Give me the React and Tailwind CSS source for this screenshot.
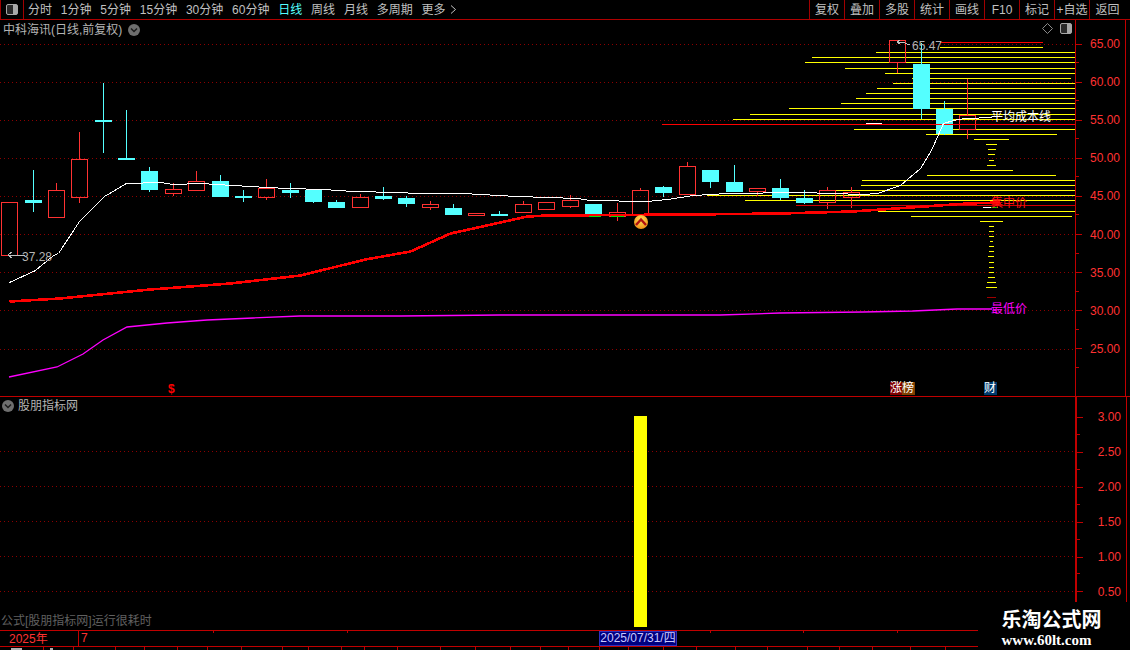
import React from 'react';

const tabs = [
  ['分时', 'text-[#c0c0c0]'], ['1分钟', 'text-[#c0c0c0]'], ['5分钟', 'text-[#c0c0c0]'], ['15分钟', 'text-[#c0c0c0]'],
  ['30分钟', 'text-[#c0c0c0]'], ['60分钟', 'text-[#c0c0c0]'], ['日线', 'text-[#54ffff]'], ['周线', 'text-[#c0c0c0]'],
  ['月线', 'text-[#c0c0c0]'], ['多周期', 'text-[#c0c0c0]'],
];
const tools = ['复权', '叠加', '多股', '统计', '画线', 'F10', '标记', '+自选', '返回'];
const upperAxis = ['65.00', '60.00', '55.00', '50.00', '45.00', '40.00', '35.00', '30.00', '25.00'];
const lowerAxis = ['3.00', '2.50', '2.00', '1.50', '1.00', '0.50'];
const upperGrid = [44, 82, 120, 158, 196, 234, 272, 310, 349];
const lowerGrid = [451, 486, 521, 556, 591];

// x, high, top, bottom, low, up(red)/down(cyan)
const candles = [
  [9, 202, 202, 255, 255, 1], [33, 170, 200, 202, 212, 0], [56, 183, 190, 217, 217, 1], [79, 132, 159, 197, 203, 1],
  [103, 83, 120, 121, 153, 0], [126, 110, 158, 159, 159, 0], [149, 167, 171, 189, 192, 0], [173, 183, 189, 193, 196, 1],
  [196, 171, 181, 190, 191, 1], [220, 175, 181, 196, 197, 0], [243, 190, 196, 197, 202, 0], [266, 179, 188, 197, 200, 1],
  [290, 183, 190, 192, 198, 0], [313, 190, 190, 201, 203, 0], [336, 200, 202, 207, 208, 0], [360, 194, 197, 207, 207, 1],
  [383, 187, 196, 198, 200, 0], [406, 196, 198, 203, 207, 0], [430, 201, 204, 207, 210, 1], [453, 204, 208, 214, 215, 0],
  [476, 213, 213, 215, 216, 1], [499, 211, 214, 215, 216, 0], [523, 201, 204, 212, 213, 1], [546, 202, 202, 209, 209, 1],
  [570, 195, 200, 206, 208, 1], [593, 204, 204, 214, 214, 0], [617, 203, 212, 216, 221, 1], [640, 188, 190, 214, 214, 1],
  [663, 186, 187, 192, 197, 0], [687, 162, 166, 194, 195, 1], [710, 170, 170, 181, 188, 0], [734, 165, 182, 191, 191, 0],
  [757, 188, 188, 191, 196, 1], [780, 179, 188, 197, 200, 0], [804, 190, 198, 202, 204, 0], [827, 187, 190, 202, 209, 1],
  [851, 187, 192, 197, 208, 1], [874, 123, 123, 124, 124, 2], [897, 40, 40, 62, 73, 1], [921, 43, 64, 108, 119, 0],
  [944, 101, 109, 133, 135, 0], [967, 79, 115, 129, 139, 1],
];

// x1, x2, y of the chip distribution bars
const chips = [
  [940, 1043, 47], [876, 1075, 52], [812, 1075, 57], [805, 1075, 62], [845, 1075, 68], [885, 1075, 73], [912, 1071, 78],
  [893, 1075, 83], [877, 1075, 88], [866, 1075, 93], [856, 1075, 98], [841, 1075, 103], [789, 1075, 108], [750, 1075, 114],
  [733, 1075, 119], [854, 1075, 129], [926, 1057, 134], [974, 1009, 139], [986, 997, 144], [988, 996, 149], [988, 995, 154],
  [989, 994, 160], [987, 996, 165], [970, 1013, 170], [927, 1056, 175], [862, 1075, 180], [861, 1075, 185], [833, 1075, 190],
  [707, 1075, 195], [745, 1075, 200], [878, 1075, 211], [911, 1072, 216], [980, 1003, 221], [989, 994, 226], [989, 994, 231],
  [989, 994, 236], [990, 993, 241], [989, 994, 246], [989, 994, 251], [988, 994, 256], [989, 994, 262], [989, 994, 267],
  [989, 994, 272], [988, 995, 277], [987, 996, 282], [986, 997, 287],
];

const whiteLine = '9,282 35,270 53,255 58,253 79,221 104,196 126,183 160,182 173,184 200,183 233,185 267,187 287,188 323,189 353,191 397,192 417,193 463,193 480,194 517,196 577,198 590,200 647,201 667,199 693,195 727,193 800,192 863,194 877,193 900,185 920,168 931,150 943,123 953,120 965,118 992,117';
const redLine = '9,301 60,298 150,289 230,283 300,275 365,259 410,251 450,233 500,222 527,216 547,215 688,214 780,213 852,211 910,207 967,203 1000,202';
const magentaLine = '9,377 57,367 83,354 103,340 127,327 167,323 207,320 253,318 300,316 400,316 500,315 720,315 780,313 863,312 913,311 957,309 992,309';

const ticks = [213, 347, 710, 803, 897];
const cells = [43, 73, 115, 144, 177, 207, 241, 282, 308, 341, 364, 397, 440, 475, 510, 540, 568, 599, 628, 663, 696, 735, 767, 807, 839, 872, 910, 945];

function ChevronDot() {
  return (
    <svg width="12" height="12" viewBox="0 0 12 12" className="shrink-0">
      <circle cx="6" cy="6" r="6" fill="#6e6e6e" />
      <path d="M3 4.5 L6 7.5 L9 4.5" fill="none" stroke="#1a1a1a" strokeWidth="1.5" />
    </svg>
  );
}

function AxisRow({ label, rowClass }) {
  return (
    <div className={`relative flex items-center justify-between pr-[5px] ${rowClass}`}>
      <span className="w-[6px] h-px bg-[#c00000]" />
      <span className="text-[#ff3232] text-[12px] leading-none">{label}</span>
      <span className="absolute left-0 bottom-0 w-[3px] h-px bg-[#c00000]" />
    </div>
  );
}

function PriceChart() {
  return (
    <svg width="1075" height="376" viewBox="0 20 1075 376" shapeRendering="crispEdges" className="block">
      <g shapeRendering="auto">
        {upperGrid.map((y) => (
          <line key={y} x1="0" x2="1075" y1={y + 0.5} y2={y + 0.5} stroke="#8c0000" strokeDasharray="1 3" />
        ))}
      </g>
      {chips.map(([a, b, y]) => (
        <line key={y} x1={a} x2={b} y1={y + 0.5} y2={y + 0.5} stroke="#ffff00" />
      ))}
      <line x1="987" x2="996" y1="297.5" y2="297.5" stroke="#a00000" />
      {candles.map(([x, hi, top, bot, lo, kind]) => {
        if (kind === 2) return <line key={x} x1={x - 8} x2={x + 8} y1={top + 0.5} y2={top + 0.5} stroke="#ffffff" />;
        if (kind === 1) {
          return (
            <g key={x} stroke="#ff3232">
              <line x1={x + 0.5} x2={x + 0.5} y1={hi} y2={top} />
              <line x1={x + 0.5} x2={x + 0.5} y1={bot} y2={lo} />
              <path d={`M${x - 7.5} ${top + 0.5} H${x + 8.5} V${bot + 0.5} H${x - 7.5} Z`} fill="none" />
            </g>
          );
        }
        return (
          <g key={x} stroke="#54ffff">
            <line x1={x + 0.5} x2={x + 0.5} y1={hi} y2={lo} />
            <rect x={x - 8 + 0.5} y={top + 0.5} width="16" height={Math.max(bot - top, 0.5)} fill="#54ffff" />
          </g>
        );
      })}
      <rect x="588" y="215" width="13" height="2" fill="#00e000" />
      <rect x="611" y="215" width="13" height="2" fill="#00e000" />
      <line x1="940" x2="1043" y1="42.5" y2="42.5" stroke="#ff0000" strokeWidth="1.5" />
      <line x1="662" x2="1075" y1="124.5" y2="124.5" stroke="#ff0000" strokeWidth="1.5" />
      <line x1="796" x2="1075" y1="205.5" y2="205.5" stroke="#d00000" />
      <line x1="983" x2="991" y1="207.5" y2="207.5" stroke="#ffffff" />
      <line x1="991" x2="998" y1="207.5" y2="207.5" stroke="#00e000" />
      <polyline points={magentaLine} fill="none" stroke="#ff00ff" strokeWidth="1.3" shapeRendering="auto" />
      <g transform="translate(0.5 0.5)">
        <polyline points={redLine} fill="none" stroke="#ff0000" strokeWidth="2.6" />
        <polyline points={whiteLine} fill="none" stroke="#ffffff" strokeWidth="1" />
      </g>
      <path d="M25 255 H8 M12 252 L8 255 L12 258" fill="none" stroke="#c0c0c0" />
      <path d="M910 45 L902 42 H897 M900 40 L897 42 L900 44" fill="none" stroke="#c0c0c0" />
      <g shapeRendering="auto">
        <defs>
          <radialGradient id="arrowDot" cx="50%" cy="35%" r="70%">
            <stop offset="0%" stopColor="#ffe25a" />
            <stop offset="100%" stopColor="#f08a10" />
          </radialGradient>
        </defs>
        <circle cx="641" cy="222" r="7" fill="url(#arrowDot)" />
        <path d="M636 225 L641 219.5 L646 225" fill="none" stroke="#b01010" strokeWidth="2.4" />
      </g>
    </svg>
  );
}

function IndicatorChart() {
  return (
    <svg width="1075" height="233" viewBox="0 397 1075 233" className="block">
      {lowerGrid.map((y) => (
        <line key={y} x1="0" x2="1075" y1={y + 0.5} y2={y + 0.5} stroke="#8c0000" strokeDasharray="1 3" />
      ))}
      <rect x="634" y="416" width="13" height="211" fill="#ffff00" />
    </svg>
  );
}

export default function App() {
  return (
    <div className="relative w-[1130px] h-[650px] bg-black overflow-hidden flex flex-col font-['Liberation_Sans','Noto_Sans_CJK_SC',sans-serif] text-[12px]">
      {/* top toolbar */}
      <div className="h-[20px] shrink-0 flex items-center border-b border-[#b00000]">
        <div className="w-[24px] h-full flex items-center justify-center border-x border-[#a00000]">
          <svg width="12" height="11" viewBox="0 0 12 11">
            <rect x="0.5" y="0.5" width="11" height="10" rx="1.5" fill="#2a2a2a" stroke="#a8a8a8" />
            <rect x="7" y="1" width="4" height="9" fill="#a8a8a8" />
          </svg>
        </div>
        <div className="flex items-center gap-[8.8px] pl-[4px]">
          {tabs.map(([t, c]) => (
            <span key={t} className={`${c} whitespace-nowrap`}>{t}</span>
          ))}
          <span className="flex items-center gap-[4px] text-[#c0c0c0] whitespace-nowrap">
            更多
            <svg width="7" height="9" viewBox="0 0 7 9"><path d="M1 0.5 L5.5 4.5 L1 8.5" fill="none" stroke="#c0c0c0" /></svg>
          </span>
        </div>
        <div className="ml-auto flex h-full">
          {tools.map((t, i) => (
            <div key={t} className={`h-full flex items-center justify-center text-[#c0c0c0] border-l border-[#a00000] whitespace-nowrap ${i === 8 ? 'w-[41px] pr-[5px]' : 'w-[35px]'}`}>
              {t}
            </div>
          ))}
        </div>
      </div>

      {/* price panel */}
      <div className="h-[377px] shrink-0 flex border-b border-[#c00000]">
        <div className="relative w-[1075px] h-full">
          <PriceChart />
          <div className="absolute left-[3px] top-[1px] flex items-center gap-[6px] text-[#b4b4b4]">
            <span>中科海讯(日线,前复权)</span>
            <ChevronDot />
          </div>
          <div className="absolute right-[3px] top-[3px] flex items-center gap-[7px]">
            <svg width="11" height="11" viewBox="0 0 11 11"><path d="M5.5 0.5 L10.5 5.5 L5.5 10.5 L0.5 5.5 Z" fill="none" stroke="#8a8a8a" /></svg>
            <svg width="12" height="11" viewBox="0 0 12 11">
              <rect x="0.5" y="0.5" width="11" height="10" rx="1.5" fill="#2a2a2a" stroke="#a8a8a8" />
              <rect x="7" y="1" width="4" height="9" fill="#a8a8a8" />
            </svg>
          </div>
          <span className="absolute left-[912px] top-[20px] text-[#b4b4b4] leading-none">65.47</span>
          <span className="absolute left-[22px] top-[231px] text-[#b4b4b4] leading-none">37.28</span>
          <span className="absolute left-[991px] top-[91px] text-white leading-none">平均成本线</span>
          <span className="absolute left-[991px] top-[177px] text-[#ff1010] leading-none">集中价</span>
          <span className="absolute left-[991px] top-[283px] text-[#ff00ff] leading-none">最低价</span>
          <span className="absolute left-[168px] top-[363px] text-[#ff0000] font-bold leading-none">$</span>
          <div className="absolute left-[890px] top-[362px] flex text-white leading-[13px]">
            <span className="w-[12px] h-[13px] bg-[#800000]">涨</span>
            <span className="w-[13px] h-[13px] bg-[#804000]">榜</span>
          </div>
          <span className="absolute left-[984px] top-[362px] w-[13px] h-[13px] bg-[#003a6e] text-white leading-[13px]">财</span>
        </div>
        <div className="w-[51px] h-full pt-[5px] border-l border-r border-[#c00000]">
          {upperAxis.map((v) => (
            <AxisRow key={v} label={v} rowClass="h-[38.1px]" />
          ))}
        </div>
      </div>

      {/* indicator panel */}
      <div className="h-[233px] shrink-0 flex">
        <div className="relative w-[1075px] h-full">
          <IndicatorChart />
          <div className="absolute left-[2px] top-0 flex items-center gap-[4px] text-[#b4b4b4]">
            <ChevronDot />
            <span>股朋指标网</span>
          </div>
          <span className="absolute left-[1px] bottom-0 text-[#606060]">公式[股朋指标网]运行很耗时</span>
        </div>
        <div className="w-[52px] h-[206px] pt-[3px] border-l-2 border-r border-[#c00000]">
          {lowerAxis.map((v) => (
            <AxisRow key={v} label={v} rowClass="h-[34.9px]" />
          ))}
        </div>
      </div>

      {/* date strip */}
      <div className="relative h-[17px] shrink-0 flex items-center border-y border-[#c00000]">
        <span className="w-[78px] pl-[9px] text-[#ff3232]">2025年</span>
        <span className="h-full border-l border-[#c00000] pl-[2px] text-[#ff3232] leading-[15px]">7</span>
        {ticks.map((x) => (
          <span key={x} className="absolute top-0 w-px h-[2px] bg-[#c00000]" style={{ left: x }} />
        ))}
        <span className="absolute left-[599px] top-0 w-[78px] h-[15px] bg-[#000080] border border-[#3030c0] text-[#c8c8ff] leading-[13px] text-center whitespace-nowrap">2025/07/31/四</span>
      </div>
      <svg width="1130" height="3" className="block shrink-0" shapeRendering="crispEdges">
        {cells.map((x) => (
          <line key={x} x1={x + 0.5} x2={x + 0.5} y1="0" y2="3" stroke="#c00000" />
        ))}
        <rect x="11" y="1" width="11" height="2" fill="#b0b0b0" />
        <rect x="50" y="1" width="3" height="2" fill="#b0b0b0" />
      </svg>

      {/* watermark */}
      <div className="absolute right-0 top-[602px] w-[152px] h-[48px] bg-black flex flex-col items-center pr-[5px]">
        <span className="mt-[6px] text-white font-bold text-[20px] leading-[24px]">乐淘公式网</span>
        <span className="mr-[10px] font-['Liberation_Serif',serif] text-white font-bold text-[15px] leading-[16px]">www.60lt.com</span>
      </div>
    </div>
  );
}
